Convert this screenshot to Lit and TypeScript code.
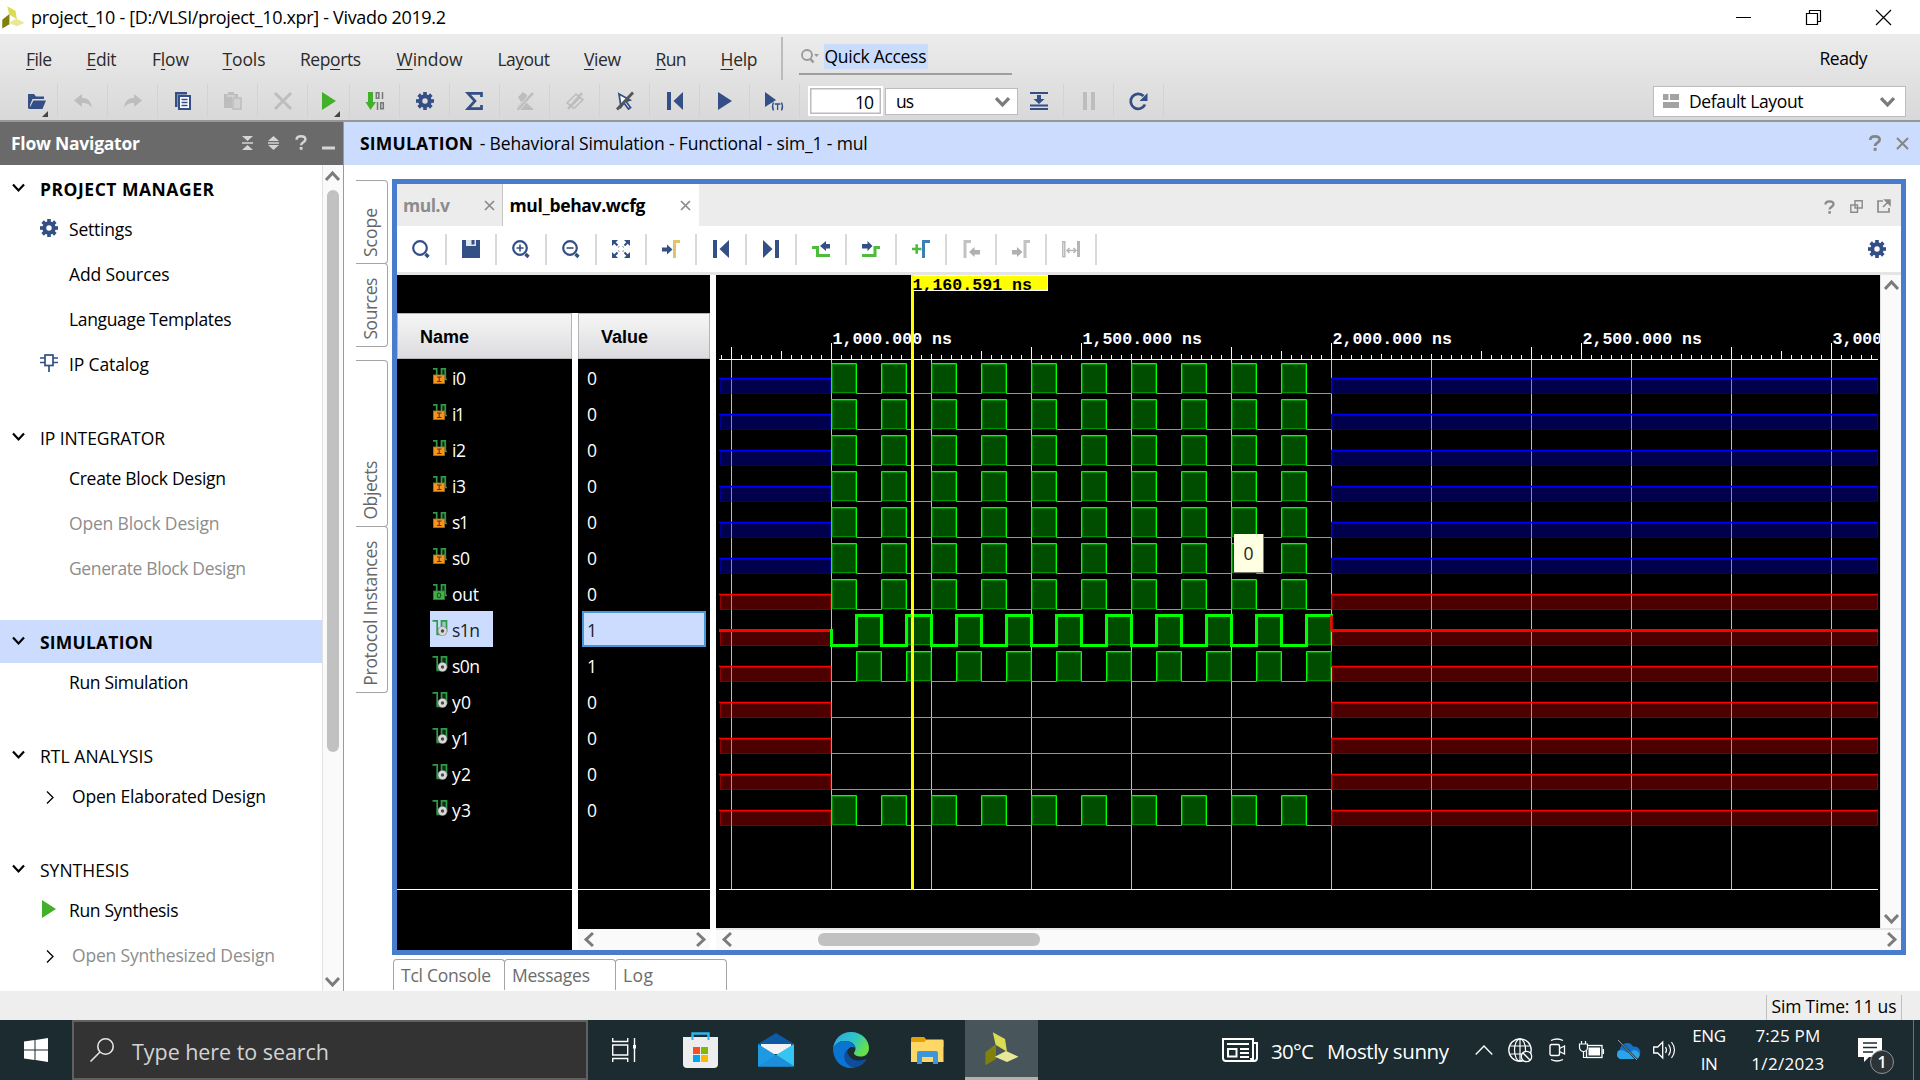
import { LitElement, html, svg, css, nothing } from "lit";
import { customElement } from "lit/decorators.js";

const UI = '"Open Sans", "Noto Sans", sans-serif';
const ctx = document.createElement("canvas").getContext("2d")!;

/** Letter spacing that makes a label take up the given width. */
const spacing = (text: string, width: number, size: number, weight: number) => {
  ctx.font = `${weight} ${size}px ${UI}`;
  const n = Math.max(1, text.length - 1);
  return ((width - ctx.measureText(text).width) / n).toFixed(3);
};

const label = (text: string, width: number, size = 17.5, weight = 400, mark = -1) => html`<span
  class="t"
  style="font-size:${size}px;font-weight:${weight};letter-spacing:${spacing(text, width, size, weight)}px"
  >${mark < 0 ? text : html`${text.slice(0, mark)}<u>${text[mark]}</u>${text.slice(mark + 1)}`}</span
>`;

const NAVY = "#334f85";
const GREY = "#bdbdbd";

const icon = (w: number, h: number, body: unknown) =>
  html`<svg class="ic" width=${w} height=${h} viewBox="0 0 ${w} ${h}" fill="none">${body}</svg>`;

const gear = () =>
  icon(18, 18, svg`
    <circle cx="9" cy="9" r="4.7" stroke=${NAVY} stroke-width="4"/>
    ${[0, 45, 90, 135, 180, 225, 270, 315].map(
      (a) => svg`<rect x="7.2" y="0" width="3.6" height="4" fill=${NAVY} transform="rotate(${a} 9 9)"/>`
    )}`);

const question = (c: string, w = 12, h = 15) =>
  html`<svg class="ic" width=${w} height=${h} viewBox="0 0 12 15" fill="none">
    <path d="M1.600 4.700C1.600 2.500 3.400 1.300 6 1.300s4.400 1.200 4.400 3.200c0 2.700-4.300 2.700-4.300 5.800" stroke=${c} stroke-width="2.500"/>
    <rect x="4.700" y="12" width="2.800" height="2.800" fill=${c}/>
  </svg>`;

const cross = (c: string, s = 12, w = 2) => icon(s, s, svg`<path d="M1 1L${s - 1} ${s - 1}M${s - 1} 1L1 ${s - 1}" stroke=${c} stroke-width=${w}/>`);

const chevron = (dir: "up" | "down" | "left" | "right", c = "#7b7b7b", s = 15, w = 3) => {
  const rot = { down: 0, left: 90, up: 180, right: 270 }[dir];
  return icon(s, s, svg`<path transform="rotate(${rot} ${s / 2} ${s / 2})" d="M1 ${s * 0.27}L${s / 2} ${s * 0.73}L${s - 1} ${s * 0.27}" stroke=${c} stroke-width=${w}/>`);
};

const vivado = (s: number) => html`<svg class="ic" width=${s} height=${s} viewBox="0 0 34 34">
  <path d="M7.800.3L20 7l2 12.700-11.400-7z" fill="#dcdc52"/>
  <path d="M11 12v15L.4 33.300v-13z" fill="#80800c"/>
  <path d="M9.800 24.700L21 19l12.500 5.700L22 30z" fill="#e8e898"/>
</svg>`;

const magnifier = (inner: unknown = nothing) =>
  icon(18, 18, svg`<circle cx="8" cy="8" r="6.800" stroke=${NAVY} stroke-width="2.200"/><path d="M13.500 14l3 3" stroke=${NAVY} stroke-width="3.400"/>${inner}`);

const play = (c: string) => icon(14, 18, svg`<path d="M0 0L14 9L0 18z" fill=${c}/>`);

const MAIN_TOOLS: { w?: string; menu?: boolean; i: unknown }[] = [
  { w: "first", menu: true, i: icon(18, 17, svg`<path d="M0 1h6l2 2.500h8V6H4.500L2 12V15.500H0z" fill=${NAVY}/><path d="M5.500 7.500H18L14.500 16H1z" fill=${NAVY}/>`) },
  { i: icon(18, 14, svg`<path d="M8 0v4c6 0 9 3 10 10-2.500-4-5-5-10-5v4L0 6.500z" fill=${GREY}/>`) },
  { i: icon(18, 14, svg`<path d="M10 0v4C4 4 1 7 0 14c2.500-4 5-5 10-5v4l8-6.500z" fill=${GREY}/>`) },
  { i: icon(16, 18, svg`<path d="M0 0h12v2.500H2.500V15H0z" fill=${NAVY}/><rect x="4" y="4" width="11" height="13" fill="#fff" stroke=${NAVY} stroke-width="2"/><path d="M6.500 7.500h6M6.500 10.500h6M6.500 13.500h6" stroke=${NAVY} stroke-width="1.600"/>`) },
  { i: icon(18, 18, svg`<path d="M0 2h4V0h6v2h4v3H8v11H0z" fill=${GREY}/><rect x="9" y="6" width="8" height="11" fill="#d2d2d2" stroke=${GREY} stroke-width="1.500"/><path d="M3 4h8" stroke="#ddd" stroke-width="1.200"/>`) },
  { i: icon(18, 18, svg`<path d="M1 1L17 17M17 1L1 17" stroke=${GREY} stroke-width="3"/>`) },
  { w: "first", menu: true, i: play("#43b02a") },
  { i: icon(18, 18, svg`<path d="M2 0h5v10h3l-5.500 8L-.5 10H2z" fill="#43b02a"/><g stroke="#777" stroke-width="1.500"><rect x="10.300" y=".8" width="2.600" height="5.400"/><path d="M16.500 0v7M11.500 10v8"/><rect x="14.700" y="10.800" width="2.600" height="5.900"/></g>`) },
  { i: gear() },
  { i: icon(17, 18, svg`<path d="M15.500 5V1.300H2L9 9 2 16.600H15.500V13" stroke=${NAVY} stroke-width="2.700"/>`) },
  { i: icon(18, 18, svg`<path d="M2 5l5-5 4 3-1 5-5 2zM1 15l5-5h3v6z M10 10l6 6H6z M1 16h16v2H1z" fill=${GREY}/><path d="M17 1L2 17.500" stroke="#d9d9d9" stroke-width="4"/><path d="M17 1L2 17.500" stroke=${GREY} stroke-width="2.200"/>`) },
  { i: icon(18, 18, svg`<path d="M1 11L10 2l4 3-9 9zM5 14.500l9-9 3 2-9 9z" stroke=${GREY} stroke-width="1.600"/><path d="M16 1L2 17" stroke=${GREY} stroke-width="2.400"/>`) },
  { i: icon(18, 18, svg`<path d="M3 2l11 6-4 1.500 4.500 6-2 1.500-4.500-6L5 15z" stroke=${NAVY} stroke-width="1.800" fill="#fff"/><path d="M17 0.500L1 17.500" stroke="#555" stroke-width="2.800"/>`) },
  { i: icon(16, 18, svg`<rect width="4" height="18" fill=${NAVY}/><path d="M16 0v18L6.500 9z" fill=${NAVY}/>`) },
  { i: play(NAVY) },
  { i: icon(19, 19, svg`<path d="M0 0l11 8L0 15z" fill=${NAVY}/><path d="M8.500 10.500q-2 4 0 8M16.500 10.500q2 4 0 8M9.800 12h5.600M12.600 12v6" stroke=${NAVY} stroke-width="1.300"/>`) },
];

const WAVE_TOOLS: unknown[] = [
  magnifier(),
  icon(18, 18, svg`<path d="M0 0h18v18H0z" fill=${NAVY}/><rect x="4" y="0" width="10" height="6" fill="#dfe5ef"/><rect x="9.500" y="0" width="3" height="4.500" fill=${NAVY}/>`),
  magnifier(svg`<path d="M4.500 8h7M8 4.500v7" stroke=${NAVY} stroke-width="1.600"/>`),
  magnifier(svg`<path d="M4.500 8h7" stroke=${NAVY} stroke-width="1.600"/>`),
  icon(18, 18, svg`<g fill=${NAVY}><path d="M0 0h6L0 6zM18 0v6l-6-6zM0 18v-6l6 6zM18 18h-6l6-6z"/></g><path d="M2 2l5 5M16 2l-5 5M2 16l5-5M16 16l-5-5" stroke=${NAVY} stroke-width="2" stroke-dasharray="5 1.500"/>`),
  icon(18, 18, svg`<path d="M0 7.500h5V4.500l5.500 5L5 14.500v-3H0z" fill=${NAVY}/><path d="M12.500 18V1.500H18" stroke="#dfc566" stroke-width="3"/>`),
  icon(16, 18, svg`<rect width="4" height="18" fill=${NAVY}/><path d="M16 0v18L6.500 9z" fill=${NAVY}/>`),
  icon(16, 18, svg`<rect x="12" width="4" height="18" fill=${NAVY}/><path d="M0 0v18L9.500 9z" fill=${NAVY}/>`),
  icon(18, 18, svg`<path d="M0 7.500h5.500v8H18" stroke="#4dbb3b" stroke-width="3"/><path d="M8 6l6-5v3h4v4.500h-4V11z" fill=${NAVY}/>`),
  icon(18, 18, svg`<path d="M18 7.500h-5v8H0" stroke="#4dbb3b" stroke-width="3"/><path d="M10.500 6l-5-5v3H0v4.500h5.500V11z" fill=${NAVY}/>`),
  icon(18, 18, svg`<path d="M0 9h9.500M4.700 4.300v9.500" stroke="#4dbb3b" stroke-width="2.600"/><path d="M11.500 18V1.500H18" stroke="#3a7fb5" stroke-width="3"/>`),
  icon(17, 18, svg`<path d="M2 18V1.500H8" stroke="#c2c2c2" stroke-width="3"/><path d="M6 12l5.500-5v3H17v4.500h-5.500V17z" fill="#b0b0b0"/>`),
  icon(18, 18, svg`<path d="M13 18V1.500h5" stroke="#c2c2c2" stroke-width="3"/><path d="M10.500 12L5 7v3H0v4.500h5V17z" fill="#b0b0b0"/>`),
  icon(18, 18, svg`<rect x=".8" y="1.700" width="2" height="15" stroke="#b5b5b5" stroke-width="1.400"/><path d="M16.500 1v16" stroke="#b5b5b5" stroke-width="3"/><path d="M5 10.500h9M7.500 8L5 10.500 7.500 13M11.500 8l2.500 2.500-2.500 2.500" stroke="#b5b5b5" stroke-width="1.500"/>`),
];

type NavItem = { s: string; w: number; off?: boolean; sub?: boolean; i?: unknown };
const NAV: { s: string; w: number; bold?: boolean; on?: boolean; items: NavItem[] }[] = [
  {
    s: "PROJECT MANAGER", w: 174, bold: true,
    items: [
      { s: "Settings", w: 63.5, i: gear() },
      { s: "Add Sources", w: 100.5 },
      { s: "Language Templates", w: 162.5 },
      { s: "IP Catalog", w: 80, i: icon(18, 18, svg`<rect x="5" y="1" width="8" height="10.500" stroke=${NAVY} stroke-width="1.700"/><path d="M0 4h5M0 8.500h5M13 4h5M13 8.500h5M9 12v6" stroke=${NAVY} stroke-width="1.700"/>`) },
    ],
  },
  { s: "IP INTEGRATOR", w: 125, items: [{ s: "Create Block Design", w: 157 }, { s: "Open Block Design", w: 150.5, off: true }, { s: "Generate Block Design", w: 177, off: true }] },
  { s: "SIMULATION", w: 113, bold: true, on: true, items: [{ s: "Run Simulation", w: 119.5 }] },
  { s: "RTL ANALYSIS", w: 113, items: [{ s: "Open Elaborated Design", w: 194, sub: true }] },
  { s: "SYNTHESIS", w: 89, items: [{ s: "Run Synthesis", w: 109.5, i: play("#43b02a") }, { s: "Open Synthesized Design", w: 203, sub: true, off: true }] },
];

type Kind = "in" | "out" | "net";
const SIGNALS: { n: string; w: number; v: string; k: Kind; z: boolean; wave: "hi" | "inv" | "low"; sel?: boolean }[] = [
  { n: "i0", w: 14, v: "0", k: "in", z: true, wave: "hi" },
  { n: "i1", w: 13, v: "0", k: "in", z: true, wave: "hi" },
  { n: "i2", w: 14, v: "0", k: "in", z: true, wave: "hi" },
  { n: "i3", w: 14, v: "0", k: "in", z: true, wave: "hi" },
  { n: "s1", w: 17, v: "0", k: "in", z: true, wave: "hi" },
  { n: "s0", w: 18, v: "0", k: "in", z: true, wave: "hi" },
  { n: "out", w: 27, v: "0", k: "out", z: false, wave: "hi" },
  { n: "s1n", w: 28, v: "1", k: "net", z: false, wave: "inv", sel: true },
  { n: "s0n", w: 28, v: "1", k: "net", z: false, wave: "inv" },
  { n: "y0", w: 19, v: "0", k: "net", z: false, wave: "low" },
  { n: "y1", w: 18, v: "0", k: "net", z: false, wave: "low" },
  { n: "y2", w: 19, v: "0", k: "net", z: false, wave: "low" },
  { n: "y3", w: 19, v: "0", k: "net", z: false, wave: "hi" },
];

const signalIcon = (k: Kind) => {
  const c = k === "in" ? "#f7941d" : "#43b049";
  if (k === "net")
    return icon(15, 16, svg`<rect x="8" y="0" width="6" height="11" fill="#2f9a47" fill-opacity=".3"/>
      <path d="M-.5 .8H4.200V14.300H9M8.500 13V.8H13.500V12" stroke="#2f9a47" stroke-width="1.700"/>
      <circle cx="9.500" cy="11" r="4.800" fill="#8a8a8a"/><circle cx="9.500" cy="11" r="4.200" fill="#d9d9d9"/><circle cx="9.500" cy="11" r="1.700" fill="#4a4a4a"/>`);
  return icon(15, 16, svg`<rect x="8" y="0" width="5" height="11" fill="#2f9a47" fill-opacity=".3"/>
    <path d="M-.0 .8H3.700V8M8.500 8V.8H12.300V11.500H14" stroke="#2f9a47" stroke-width="1.700"/>
    <rect x=".5" y="7" width="11" height="8.500" fill=${c} stroke=${k === "in" ? "#a8752c" : "#3c7d42"} stroke-width=".8"/>
    ${k === "in" ? svg`<path d="M4 9h4.500M4 13.500h4.500M6.200 9v4.500" stroke="#4a3a20" stroke-width="1.100"/>` : svg`<ellipse cx="6" cy="11.300" rx="1.700" ry="2.300" stroke="#1d5c25" stroke-width="1.200"/>`}`);
};

/* Timeline geometry, in pixels from the corner of the waveform canvas. */
const X0 = 115, XA = 3, XB = 615, XE = 1162, RULER = 84, FLOOR = 614;

const pulse = (x: number, hi: number, lo: number) => svg`
  <rect x=${x} y=${hi} width="25" height=${lo - hi} fill="#00ff00" fill-opacity=".3"/>
  <rect x=${x + 1} y=${hi + 1} width="23" height=${lo - hi - 2} stroke="#00b000" stroke-opacity=".7" fill="none"/>`;

const trace = (s: (typeof SIGNALS)[number], i: number) => {
  const hi = 88.5 + i * 36, mid = hi + 15, lo = hi + 30;
  const c = s.z ? "#0000ff" : "#ff0000";
  const w = s.sel ? 3 : 1;
  const shift = s.wave === "inv" ? 25 : 0;
  const starts = s.wave === "low" ? [] : Array.from({ length: 10 }, (_, n) => X0 + 0.5 + n * 50 + shift);
  let d = s.wave === "hi" ? `M${X0 + 0.5} ${lo}` : `M${X0 + 0.5} ${mid}V${lo}`;
  for (const x of starts) d += `H${x}V${hi}H${x + 25}` + (x + 25 > XB ? "" : `V${lo}`);
  if (s.wave !== "inv") d += `H${XB + 0.5}`;
  const idle = (a: number, b: number) => svg`
    <rect x=${a + 1} y=${mid} width=${b - a - 1} height="15" fill=${c} fill-opacity=".3"/>
    <rect x=${a + 1.5} y=${mid + 0.5} width=${b - a - 2} height="14.500" stroke=${c} stroke-opacity=".4" fill="none"/>
    <path d="M${a} ${mid}H${b}" stroke=${c} stroke-width=${s.sel ? 3 : 1.6}/>`;
  return svg`<g>
    ${idle(XA, X0)}${idle(XB, XE)}
    ${starts.map((x) => pulse(x, hi, lo))}
    <path d=${d} stroke="#00ff00" stroke-width=${w} stroke-linecap="square" fill="none"/>
    <path d="M${XB + 0.5} ${s.wave === "inv" ? hi : mid}V${s.wave === "inv" ? mid : lo}" stroke=${c} stroke-width=${s.sel ? 2.6 : 1}/>
  </g>`;
};

const tickTop = (x: number) => {
  const o = x - X0;
  if (o % 250 === 0) return 68;
  if ([-100, 200, 400, 700, 900].includes(o)) return 72;
  if ([-50, 150, 450, 650, 950].includes(o)) return 76;
  if (o % 50 === 0) return 79;
  return 80;
};

const timeline = () => {
  const ticks = Array.from({ length: 116 }, (_, n) => 5 + n * 10);
  const grid = Array.from({ length: 12 }, (_, n) => 15 + n * 100);
  const labels = ["1,000.000 ns", "1,500.000 ns", "2,000.000 ns", "2,500.000 ns", "3,000.000 ns"];
  return html`<svg class="wave" width="1164" height="653" viewBox="0 0 1164 653" fill="none">
    <rect width="1164" height="653" fill="#000"/>
    ${grid.map((x) => svg`<path d="M${x + 0.5} ${RULER}V${FLOOR}" stroke="#bdbdbd"/>`)}
    ${ticks.map((x) => svg`<path d="M${x + 0.5} ${tickTop(x)}V${RULER}" stroke="#fff"/>`)}
    <path d="M${XA} ${RULER + 0.5}H${XE}M${XA} ${FLOOR + 0.5}H${XE}" stroke="#fff"/>
    ${SIGNALS.map(trace)}
    ${labels.map((l, n) => svg`<text class="mono" x=${X0 + 1.5 + n * 250} y="69" fill="#fff">${l}</text>`)}
    <rect x="195.500" y=".5" width="136" height="15" fill="#ff0" stroke="#fff"/>
    <path d="M196.500 0V615" stroke="#ff0" stroke-width="3"/>
    <text class="mono" x="196.500" y="15" fill="#000">1,160.591 ns</text>
  </svg>`;
};

const MENU: [string, number, number][] = [
  ["File", 26, 0], ["Edit", 30, 0], ["Flow", 37, 1], ["Tools", 43, 0], ["Reports", 61, 3],
  ["Window", 66, 0], ["Layout", 52.5, 2], ["View", 37, 0], ["Run", 31, 0], ["Help", 37, 0],
];

@customElement("app-root")
export class AppRoot extends LitElement {
  static styles = css`
    :host { display: flex; flex-direction: column; width: 1920px; height: 1080px; overflow: hidden; background: #fff; color: #000; font-family: "Open Sans", "Noto Sans", sans-serif; font-size: 17.5px; }
    * { box-sizing: border-box; }
    .ic { display: block; flex: none; overflow: visible; }
    .t { white-space: pre; display: inline-block; line-height: 24px; }
    u { text-decoration-thickness: 1px; text-underline-offset: 3px; }

    .title { height: 34px; display: flex; align-items: center; padding: 0 29px 0 2px; flex: none; }
    .title .t { margin-left: 6px; flex: 1; }
    .wins { display: flex; gap: 55px; align-items: center; }

    .chrome { height: 88px; flex: none; background: linear-gradient(#ececec, #d9d9d9 97%); border-bottom: 2px solid #979797; display: grid; grid-template-rows: 48px 38px; }
    .menu { display: flex; align-items: center; }
    .items { display: grid; grid-template-columns: 60.5px 65.5px 70.5px 77.5px 96.500px 101px 86.500px 71.500px 65px 60px; padding-left: 26px; padding-top: 2px; color: #2b2b2b; }
    .bar { width: 2px; height: 43px; background: #bcbcbc; }
    .quick { margin-left: 16px; margin-bottom: 7px; width: 213px; height: 33px; border-bottom: 2.5px solid #9f9f9f; display: flex; align-items: flex-start; padding-left: 2px; gap: 5px; align-self: flex-end; }
    .quick .ic { margin-top: 7px; }
    .quick .hl { background: #c9dcfc; height: 25px; width: 104px; padding-left: 1px; margin-top: 2px; }
    .ready { margin-left: auto; margin-right: 53px; }
    .tools { display: flex; align-items: center; padding: 0 14px 0 16px; }
    .cell { width: 50px; height: 34px; display: flex; align-items: center; justify-content: center; border-right: 1px solid #d3d3d3; position: relative; }
    .cell.first { width: 42px; }
    .cell.tight { width: 46px; padding-right: 4px; }
    .corner { position: absolute; right: 9px; bottom: 1px; width: 0; height: 0; border-left: 6px solid transparent; border-bottom: 6px solid #444; }
    .num { margin-left: 8px; width: 75px; height: 30px; border: 2px solid #fff; outline: 0; box-shadow: inset 0 0 0 1.5px #bbb; background: #fff; display: flex; justify-content: flex-end; padding: 2px 8px 0 0; line-height: 24px; overflow: hidden; }
    .combo { margin-left: 2px; width: 133px; height: 27px; border: 1.5px solid #bcbcbc; background: #fff; display: flex; align-items: center; justify-content: space-between; padding: 0 7px 0 10px; }
    .layout { margin-left: auto; width: 253px; height: 31px; justify-content: flex-start; padding: 0 10px 0 9px; }
    .layout .t { margin-left: 10px; flex: 1; }

    .body { display: flex; height: 869px; flex: none; }
    .nav { width: 344px; border-right: 1.5px solid #9a9a9a; display: flex; flex-direction: column; }
    .navhead { height: 43px; flex: none; background: #6a6a6a; color: #fff; display: flex; align-items: center; padding: 0 8px 2px 11px; }
    .navhead .t { flex: 1; }
    .heads { display: flex; gap: 15.500px; align-items: center; }
    .navbody { flex: 1; display: flex; min-height: 0; }
    .tree { flex: 1; padding-top: 2px; overflow: hidden; }
    .sec { height: 43px; display: grid; grid-template-columns: 40px 1fr; align-items: center; padding-top: 1px; }
    .sec .ic { margin: -4px 0 0 11.500px; }
    .sec.on { background: #cbdcfe; }
    .list { margin: -3.5px 0 29.5px; }
    .row { height: 45px; display: grid; grid-template-columns: 69px 1fr; align-items: center; }
    .row.sub { grid-template-columns: 72px 1fr; }
    .row .lead { display: flex; justify-content: center; padding-left: 29px; margin-top: -2px; }
    .row.sub .lead { padding-left: 27px; margin-top: 2px; }
    .off { color: #8d8d8d; }
    .vbar { width: 21px; background: #fafafa; border-left: 1.5px solid #e2e2e2; display: flex; flex-direction: column; align-items: center; padding: 4px 1px 2px 0; }
    .vbar .thumb { width: 12px; height: 562px; border-radius: 6px; background: #c1c1c1; margin: 6px 0 auto; }

    .main { flex: 1; display: flex; flex-direction: column; min-width: 0; }
    .mainhead { height: 43px; background: #cbdcfe; display: flex; align-items: center; padding: 0 11px 1px 16px; flex: none; }
    .mainhead .sub { margin-left: 6.500px; flex: 1; display: flex; }
    .mainhead .right { display: flex; gap: 14px; align-items: center; }
    .work { display: grid; grid-template-columns: 36px 1514px; column-gap: 0; padding: 14px 0 0 12px; flex: 1; }
    .side { display: flex; flex-direction: column; padding-top: 1px; }
    .stab { width: 31.5px; border: 1.5px solid #a5a5a5; border-left: 0; border-radius: 0 4px 4px 0; display: flex; flex-direction: row; align-items: flex-end; justify-content: center; color: #666; height: 83.5px; margin-bottom: -.5px; padding: 0 3px 6px 0; }
    .stab.tall { height: 166.5px; }
    .stab.gap { margin-top: 14px; }
    .stab .t { writing-mode: vertical-rl; transform: rotate(180deg); }
    .frame { height: 776px; border: 5px solid #487ccd; display: flex; flex-direction: column; }
    .tabs { height: 42px; background: #ececec; display: flex; align-items: stretch; flex: none; }
    .tab { display: flex; align-items: center; justify-content: space-between; }
    .tab.a { width: 106px; padding: 0 7px 0 6px; color: #8c8c8c; border-right: 1.5px solid #c6c6c6; }
    .tab.b { width: 196px; padding: 0 8px 0 6.500px; background: #fff; }
    .tabs .right { margin-left: auto; display: flex; gap: 14.500px; align-items: center; padding: 3px 11px 0 0; }
    .wtools { height: 49px; border-bottom: 3px solid #e5e5e5; display: flex; align-items: center; padding-right: 15px; flex: none; }
    .wcell { width: 50px; height: 31px; border-right: 2px solid #d9d9d9; display: flex; align-items: center; justify-content: center; }
    .wtools > .ic { margin-left: auto; }
    .view { display: grid; grid-template-columns: 175px 132px 1185px; column-gap: 6px; flex: 1; min-height: 0; background: linear-gradient(90deg, #000 313px, #fff 313px) 0 0 / 313px 38px no-repeat; }
    .col { padding-top: 38px; display: flex; flex-direction: column; min-height: 0; }
    .th { height: 46px; flex: none; border: 1.5px solid #b5b5b7; background: linear-gradient(#f6f6f6, #dcdce0); font: bold 18px "Liberation Sans", Arial, sans-serif; display: flex; align-items: center; padding: 2px 0 0 22px; }
    .cells { background: #000; color: #fff; flex: none; height: 530px; }
    .foot { background: #000; border-top: 1px solid #fff; flex: 1; }
    .sig { height: 36px; display: flex; align-items: center; width: max-content; margin-left: 33px; padding: 2px 13.500px 0 3px; gap: 4px; }
    .sig .ic { margin-top: -4px; }
    .sig.sel { background: #cbdcfe; color: #222; }
    .val { height: 36px; display: flex; align-items: center; margin: 0 4px; border: 2px solid transparent; padding: 2px 0 0 3px; }
    .val.sel { background: #cbdcfe; border-color: #4597d8; color: #222; }
    .hbar { height: 21px; flex: none; background: #fafafa; display: flex; align-items: center; justify-content: space-between; padding: 0 2px 0 4px; }
    .canvas { display: grid; grid-template-columns: 1164px 21px; grid-template-rows: 653px 22px; position: relative; }
    .wave { display: block; }
    .mono { font: bold 16.600px "Liberation Mono", monospace; }
    .wv { background: #fafafa; border-left: 1.5px solid #e2e2e2; display: flex; flex-direction: column; justify-content: space-between; align-items: center; padding: 3px 0 2px 0; }
    .wh { grid-column: 1 / 3; height: 22px; border-top: 2px solid #e6e6e6; padding-bottom: 1px; }
    .wh .thumb { height: 13px; width: 222px; margin: 0 auto 0 83px; border-radius: 6px; background: #c1c1c1; }
    .tip { position: absolute; left: 518px; top: 259px; width: 30px; height: 39px; background: #ffffe1; border: 1px solid #77776c; border-width: 0 1.5px 1.5px 0; color: #222; display: flex; align-items: center; justify-content: center; }
    .btabs { grid-column: 2; display: flex; padding: 4px 0 0 1px; height: 36px; }
    .btab { width: 111.500px; height: 31px; margin-right: -.5px; border: 1.5px solid #a5a5a5; border-bottom: 0; border-radius: 4px 4px 0 0; color: #6c6c6c; padding: 3px 0 0 7px; }

    .status { height: 29px; flex: none; background: #eee; display: flex; justify-content: flex-end; padding: 4px 18.5px 0 0; }
    .status div { border: 1.5px solid #c0c0c0; border-width: 0 1.5px; width: 136px; padding-left: 5px; display: flex; }
    .status .t { margin-top: -1px; }

    .task { height: 60px; flex: none; background: #1b2b30; color: #fff; display: grid; grid-template-columns: 72px 516px 72px 80px 72px 78px 74px 74px 184px 49px 56px 148px 33px 41px 31px 36px 37px 33px 46px 112px 69px 7px; align-items: center; }
    .mid { justify-self: center; }
    .search { height: 60px; border: 2px solid #606060; background: #333; display: flex; align-items: center; padding-left: 16px; color: #d3d3d3; }
    .search .t { margin: 3px 0 0 18px; }
    .active { height: 60px; margin-left: 1px; background: #48565b; border-bottom: 3px solid #b3b0ae; display: flex; align-items: center; justify-content: center; grid-column: 8; }
    .news { grid-column: 10; }
    .two { display: flex; flex-direction: column; align-items: center; }
    .two .t { line-height: 28px; }
    .task > .low { padding-top: 3px; }
    .note { padding-left: 14px; position: relative; }
    .badge { position: absolute; left: 26px; top: 12px; width: 24px; height: 24px; border-radius: 50%; background: #2d3336; border: 1.5px solid #8d9496; font-size: 16px; font-weight: 600; display: flex; align-items: center; justify-content: center; }
    .show { height: 60px; border-left: 1.5px solid #66757a; }
  `;

  render() {
    return html`
      <div class="title">
        ${vivado(23)}${label("project_10 - [D:/VLSI/project_10.xpr] - Vivado 2019.2", 415, 18)}
        <div class="wins">
          ${icon(15, 15, svg`<path d="M0 7.500h15" stroke="#000"/>`)}
          ${icon(15, 15, svg`<path d="M.5 3.500h11v11H.5zM3.500 3V.5h11v11H12" stroke="#000" stroke-width="1.200"/>`)}
          ${icon(15, 15, svg`<path d="M0 0l15 15M15 0L0 15" stroke="#000" stroke-width="1.200"/>`)}
        </div>
      </div>
      <div class="chrome">
        <div class="menu">
          <div class="items">${MENU.map(([s, w, u]) => html`<div>${label(s, w, 17.5, 400, u)}</div>`)}</div>
          <div class="bar"></div>
          <div class="quick">
            ${icon(18, 16, svg`<circle cx="6" cy="6" r="5" stroke="#999" stroke-width="1.800"/><path d="M9.500 10l3 3.500" stroke="#999" stroke-width="2.500"/><path d="M13 5h5l-2.500 3z" fill="#999"/>`)}
            <div class="hl">${label("Quick Access", 102)}</div>
          </div>
          <div class="ready">${label("Ready", 48)}</div>
        </div>
        <div class="tools">
          ${MAIN_TOOLS.map((t) => html`<div class="cell ${t.w ?? ""}">${t.i}${t.menu ? html`<i class="corner"></i>` : nothing}</div>`)}
          <div class="num">${label("10", 19)}</div>
          <div class="combo">${label("us", 18)}${chevron("down", "#7b7b7b", 15, 3.2)}</div>
          <div class="cell tight">${icon(18, 18, svg`<path d="M0 1h18M0 13.500h18M0 17h18" stroke=${NAVY} stroke-width="1.800"/><path d="M7 3h4v4h3.500L9 12 3.500 7H7z" fill=${NAVY}/>`)}</div>
          <div class="cell">${icon(12, 18, svg`<path d="M2 0v18M10 0v18" stroke=${GREY} stroke-width="4"/>`)}</div>
          <div class="cell">${icon(19, 18, svg`<path d="M16 12.500A7.500 7.500 0 1 1 14.500 4" stroke=${NAVY} stroke-width="2.800"/><path d="M18.500 1v8H10.500z" fill=${NAVY}/>`)}</div>
          <div class="combo layout">
            ${icon(16, 14, svg`<path d="M0 0h5.500v6H0zM7 0h9v6H7zM0 8h16v6H0z" fill="#a3a3a3"/>`)}
            ${label("Default Layout", 114.5)}${chevron("down", "#7b7b7b", 15, 3.2)}
          </div>
        </div>
      </div>
      <div class="body">
        <div class="nav">
          <div class="navhead">
            ${label("Flow Navigator", 129, 17.5, 700)}
            <div class="heads">
              ${icon(11, 14, svg`<path d="M0 0h11L5.500 5zM0 14h11L5.500 9z" fill="#d5d5d5"/><path d="M0 7h11" stroke="#d5d5d5" stroke-width="1.500"/>`)}
              ${icon(11, 14, svg`<path d="M0 5h11L5.500 0zM0 9h11L5.500 14z" fill="#d5d5d5"/><path d="M0 7h11" stroke="#d5d5d5" stroke-width="1.500"/>`)}
              ${question("#d5d5d5", 12, 15)}
              ${icon(13, 14, svg`<path d="M0 12h13" stroke="#d5d5d5" stroke-width="3"/>`)}
            </div>
          </div>
          <div class="navbody">
            <div class="tree">
              ${NAV.map((g) => html`
                <div class="sec ${g.on ? "on" : ""}">${chevron("down", "#000", 13, 2.2)}${label(g.s, g.w, 17.5, g.bold ? 700 : 400)}</div>
                <div class="list">
                  ${g.items.map((r) => html`<div class="row ${r.sub ? "sub" : ""}">
                    <div class="lead">${r.sub ? icon(8, 13, svg`<path d="M1 .5l6 6-6 6" stroke="#000" stroke-width="1.300"/>`) : r.i ?? nothing}</div>
                    <div class=${r.off ? "off" : ""}>${label(r.s, r.w)}</div>
                  </div>`)}
                </div>`)}
            </div>
            <div class="vbar">${chevron("up")}<div class="thumb"></div>${chevron("down")}</div>
          </div>
        </div>
        <div class="main">
          <div class="mainhead">
            ${label("SIMULATION", 113, 17.5, 700)}
            <div class="sub">${label("- Behavioral Simulation - Functional - sim_1 - mul", 388)}</div>
            <div class="right">${question("#858585", 14, 16)}${cross("#858585", 13, 2)}</div>
          </div>
          <div class="work">
            <div class="side">
              <div class="stab">${label("Scope", 49)}</div>
              <div class="stab">${label("Sources", 62)}</div>
              <div class="stab tall gap">${label("Objects", 59)}</div>
              <div class="stab tall">${label("Protocol Instances", 145)}</div>
            </div>
            <div class="frame">
              <div class="tabs">
                <div class="tab a">${label("mul.v", 47, 17.5, 700)}${cross("#8c8c8c", 11, 1.7)}</div>
                <div class="tab b">${label("mul_behav.wcfg", 136, 17.5, 700)}${cross("#8c8c8c", 11, 1.7)}</div>
                <div class="right">
                  ${question("#8a8a8a", 11, 14)}
                  ${icon(13, 13, svg`<path d="M5 .8h7.200V8H5zM.8 5h6.700v7.200H.8z" stroke="#8a8a8a" stroke-width="1.400"/>`)}
                  ${icon(13, 13, svg`<path d="M6 1H1v11h11V8" stroke="#8a8a8a" stroke-width="1.700"/><path d="M8 0h5v5zM6 7l5-5" fill="#8a8a8a" stroke="#8a8a8a" stroke-width="1.500"/>`)}
                </div>
              </div>
              <div class="wtools">${WAVE_TOOLS.map((i) => html`<div class="wcell">${i}</div>`)}${gear()}</div>
              <div class="view">
                <div class="col">
                  <div class="th">Name</div>
                  <div class="cells">${SIGNALS.map((s) => html`<div class="sig ${s.sel ? "sel" : ""}">${signalIcon(s.k)}${label(s.n, s.w)}</div>`)}</div>
                  <div class="foot"></div>
                </div>
                <div class="col">
                  <div class="th">Value</div>
                  <div class="cells">${SIGNALS.map((s) => html`<div class="val ${s.sel ? "sel" : ""}">${label(s.v, 10)}</div>`)}</div>
                  <div class="foot"></div>
                  <div class="hbar">${chevron("left")}${chevron("right")}</div>
                </div>
                <div class="canvas">
                  ${timeline()}
                  <div class="wv">${chevron("up")}${chevron("down")}</div>
                  <div class="hbar wh">${chevron("left")}<div class="thumb"></div>${chevron("right")}</div>
                  <div class="tip">0</div>
                </div>
              </div>
            </div>
            <div class="btabs">
              <div class="btab">${label("Tcl Console", 90)}</div>
              <div class="btab">${label("Messages", 78)}</div>
              <div class="btab">${label("Log", 30)}</div>
            </div>
          </div>
        </div>
      </div>
      <div class="status"><div>${label("Sim Time: 11 us", 125)}</div></div>
      <div class="task">
        <div class="mid">${icon(24, 24, svg`<path d="M0 3.500L10.500 2v9.500H0zM11.500 1.900L24 0v11.500H11.500zM0 12.500h10.500V22L0 20.500zM11.500 12.500H24V24l-12.500-1.900z" fill="#fff"/>`)}</div>
        <div class="search">${icon(24, 24, svg`<circle cx="15.500" cy="8.500" r="7.700" stroke="#e5e5e5" stroke-width="1.600"/><path d="M10 14L.5 23.500" stroke="#e5e5e5" stroke-width="1.600"/>`)}${label("Type here to search", 197, 21.5)}</div>
        <div class="mid">${icon(24, 24, svg`<path d="M.7 0v3.500h15V0M.7 7h15v10h-15zM.7 24v-3.500h15V24M22.500 0v24" stroke="#fff" stroke-width="1.400"/><rect x="21" y="7" width="3" height="3.500" fill="#fff"/>`)}</div>
        <div class="mid">${icon(35, 36, svg`<path d="M9.500 7V1.500h16V7" stroke="#2fb6ee" stroke-width="2.400"/><path d="M0 5h35v27a4 4 0 0 1-4 4H4a4 4 0 0 1-4-4z" fill="#ededed"/><path d="M9.500 8V4M25.500 8V4" stroke="#2fb6ee" stroke-width="2"/><path fill="#f25022" d="M10 15h7v7h-7z"/><path fill="#7fba00" d="M18 15h7v7h-7z"/><path fill="#00a4ef" d="M10 23h7v7h-7z"/><path fill="#ffb900" d="M18 23h7v7h-7z"/>`)}</div>
        <div class="mid">${icon(36, 34, svg`<path d="M0 11L18 0l18 11v8H0z" fill="#0c59a4"/><path d="M3 11h30v10H3z" fill="#f3f3f3"/><path d="M0 11l36 22.500H0z" fill="#1f9ae0"/><path d="M36 11v22.500L18 22z" fill="#35c5f4"/><path d="M0 33.500L18 22l18 11.500z" fill="#1c8fdb"/>`)}</div>
        <div class="mid">${icon(36, 36, svg`
          <defs><linearGradient id="eg" x1="0" x2="1" y1="0" y2=".5"><stop stop-color="#2aa7e8"/><stop offset=".6" stop-color="#30c6c4"/><stop offset="1" stop-color="#66e04a"/></linearGradient></defs>
          <path d="M0 17C1 7 8 0 18 0c11 0 18 8 18 16 0 6-4 8.500-8 8.500-4 0-7-1.500-7-3.500 0-1 1.500-1.500 1.500-4.500C22.500 12 18 9 12 9 6 9 2 12 0 17z" fill="url(#eg)"/>
          <path d="M0 17C2 12 6 9 12 9c5 0 10 3 10.500 7-3-2-8-1-9 5-1 7 6 13 13 12-3 2-6 3-9 3C8 36 0 28 0 17z" fill="#0a74d0"/>
          <path d="M13.500 18c-6 8 1 17 8 17.500 6-1 10-4 12-8-1-1-4 1.500-9 1-6-.5-10-5-11-10.500z" fill="#0f4c9c"/>`)}</div>
        <div class="mid">${icon(33, 27, svg`<path d="M0 1.500A1.500 1.500 0 0 1 1.500 0H13l3 3h15a1.500 1.500 0 0 1 1.500 1.500V10H0z" fill="#e3a008"/><path d="M0 5h13l3-2.500h15.500a1 1 0 0 1 1 1V25H0z" fill="#ffd766"/><path d="M6 27V16a2 2 0 0 1 2-2h17a2 2 0 0 1 2 2v11h-5v-7H11v7z" fill="#3b96dd"/>`)}</div>
        <div class="active">${vivado(34)}</div>
        <div class="news">${icon(36, 24, svg`<path d="M1 1h30v22H4a3 3 0 0 1-3-3zM31 5h4v15a3 3 0 0 1-6 0" stroke="#fff" stroke-width="2"/><path d="M5 6h22M18 11h9M18 15h9M18 19h9" stroke="#fff" stroke-width="2"/><rect x="6" y="11" width="8.500" height="7.500" stroke="#fff" stroke-width="2"/>`)}</div>
        <div class="low">${label("30°C", 43, 20.5)}</div>
        <div class="low">${label("Mostly sunny", 122, 20.5)}</div>
        <div>${icon(18, 10, svg`<path d="M.7 9.500L9 1l8.300 8.500" stroke="#fff" stroke-width="1.400"/>`)}</div>
        <div>${icon(24, 24, svg`<circle cx="12" cy="12" r="11.200" stroke="#fff" stroke-width="1.300"/><ellipse cx="12" cy="12" rx="5.500" ry="11.200" stroke="#fff" stroke-width="1.200"/><path d="M1 8h22M1 16h15M12 1v22" stroke="#fff" stroke-width="1.200"/><circle cx="18.500" cy="18.500" r="5.200" fill="#1b2b30" stroke="#fff" stroke-width="1.300"/><path d="M15 15l7 7" stroke="#fff" stroke-width="1.300"/>`)}</div>
        <div>${icon(17, 24, svg`<rect x="1" y="6.500" width="9.500" height="11" rx="1.500" stroke="#fff" stroke-width="1.400"/><path d="M10.500 10.500l5-2.500v8l-5-2.500M2 2.500q6-3 12 0M2 21.500q6 3 12 0" stroke="#fff" stroke-width="1.300"/>`)}</div>
        <div>${icon(24, 18, svg`<rect x="6.500" y="4.500" width="15.500" height="12" stroke="#fff" stroke-width="1.300"/><rect x="8.500" y="6.500" width="11.500" height="8" fill="#fff"/><path d="M23.300 8v5" stroke="#fff" stroke-width="1.500"/><path d="M-.5 3h8v3.500a4 4 0 0 1-8 0z" fill="#1b2b30" stroke="#fff" stroke-width="1.200"/><path d="M1.500 0v3M5.500 0v3M3.500 10v6.500h3" stroke="#fff" stroke-width="1.200"/>`)}</div>
        <div>${icon(24, 20, svg`<path d="M5 19a5 5 0 0 1-1-9.500A7 7 0 0 1 17 6.500 5.500 5.500 0 0 1 19 19z" fill="#1572c6"/><path d="M4 19a4.700 4.700 0 0 1 1-9q3 0 7 3l6-3q6 1 5.500 5.500-.5 3.500-4 3.500z" fill="#2ba5ea"/><path d="M2 0l19 20" stroke="#1b2b30" stroke-width="2"/><path d="M2 0l19 20" stroke="#9aa3a6" stroke-width="1"/>`)}</div>
        <div>${icon(23, 18, svg`<path d="M.7 6h4l5-5v16l-5-5h-4z" stroke="#fff" stroke-width="1.300"/><path d="M12.500 6q2 3 0 6M15.500 3.500q4 5.500 0 11M18.500 1q6 8 0 16" stroke="#fff" stroke-width="1.200"/>`)}</div>
        <div class="two">${label("ENG", 34, 17)}${label("IN", 17, 17)}</div>
        <div class="two">${label("7:25 PM", 65, 17)}${label("1/2/2023", 73, 17)}</div>
        <div class="note">${icon(24, 24, svg`<path d="M0 0h24v19H11l-5 5v-5H0z" fill="#fff"/><path d="M5 5h14M5 9.500h14M5 14h10" stroke="#1b2b30" stroke-width="1.500"/>`)}<div class="badge">1</div></div>
        <div class="show"></div>
      </div>
    `;
  }
}
